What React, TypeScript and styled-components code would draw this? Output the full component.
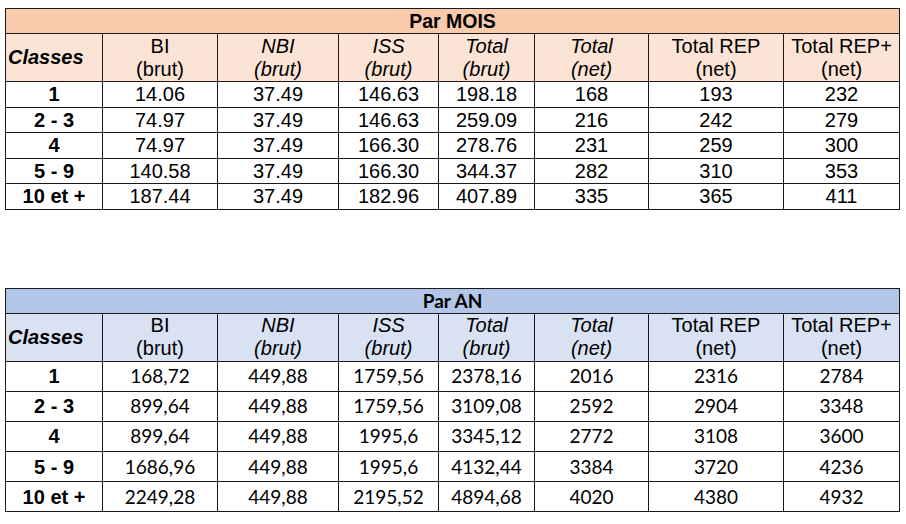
import React from 'react';
import styled, { createGlobalStyle } from 'styled-components';

const GlobalStyle = createGlobalStyle`
  html, body {
    margin: 0;
    padding: 0;
    background: #ffffff;
  }
  body {
    font-family: "Liberation Sans", Arial, sans-serif;
    color: #000;
  }
`;

interface Palette {
    title: string;
    head: string;
}

const palettes: Record<'mois' | 'an', Palette> = {
    mois: { title: '#f8cbad', head: '#fbe4d5' },
    an: { title: '#b4c6e7', head: '#d9e2f3' },
};

const arial = '"Liberation Sans", Arial, sans-serif';
const calibri = '"Lato", "Open Sans", sans-serif';

const Page = styled.div`
  padding: 8px 0 0 5px;
  display: flex;
  flex-direction: column;
  gap: 78px;
`;

const Table = styled.table<{ $rowHeight: number }>`
  width: 894px;
  table-layout: fixed;
  border-collapse: collapse;
  font-size: 20px;
  font-family: ${arial};

  td {
    border: 1px solid #1a1a1a;
    padding: 0;
    text-align: center;
    vertical-align: middle;
  }

  tbody td {
    height: ${p => p.$rowHeight}px;
    line-height: 20px;
  }
`;

const TitleCell = styled.td<{ $bg: string; $calibri?: boolean }>`
  background: ${p => p.$bg};
  height: 24px;
  font-weight: bold;
  font-size: ${p => (p.$calibri ? '19px' : '19.5px')};
  line-height: 22px;
  font-family: ${p => (p.$calibri ? calibri : arial)};
`;

const HeadCell = styled.td<{ $bg: string; $italic?: boolean }>`
  background: ${p => p.$bg};
  height: 47px;
  line-height: 23px;
  font-style: ${p => (p.$italic ? 'italic' : 'normal')};
  white-space: nowrap;
`;

const ClassHead = styled.td<{ $bg: string }>`
  background: ${p => p.$bg};
  height: 47px;
  font-weight: bold;
  font-style: italic;
  text-align: left !important;
  padding-left: 2px !important;
`;

const ClassCell = styled.td`
  font-weight: bold;
`;

const ValueCell = styled.td<{ $calibri?: boolean }>`
  font-family: ${p => (p.$calibri ? calibri : arial)};
  font-size: ${p => (p.$calibri ? '19px' : '20px')};
`;

const widths = [97, 115, 121, 100, 96, 114, 135, 116];

const headers: { top: string; bottom: string; italic: boolean }[] = [
    { top: 'BI', bottom: '(brut)', italic: false },
    { top: 'NBI', bottom: '(brut)', italic: true },
    { top: 'ISS', bottom: '(brut)', italic: true },
    { top: 'Total', bottom: '(brut)', italic: true },
    { top: 'Total', bottom: '(net)', italic: true },
    { top: 'Total REP', bottom: '(net)', italic: false },
    { top: 'Total REP+', bottom: '(net)', italic: false },
];

const classes = ['1', '2 - 3', '4', '5 - 9', '10 et +'];

const moisRows = [
    ['14.06', '37.49', '146.63', '198.18', '168', '193', '232'],
    ['74.97', '37.49', '146.63', '259.09', '216', '242', '279'],
    ['74.97', '37.49', '166.30', '278.76', '231', '259', '300'],
    ['140.58', '37.49', '166.30', '344.37', '282', '310', '353'],
    ['187.44', '37.49', '182.96', '407.89', '335', '365', '411'],
];

const anRows = [
    ['168,72', '449,88', '1759,56', '2378,16', '2016', '2316', '2784'],
    ['899,64', '449,88', '1759,56', '3109,08', '2592', '2904', '3348'],
    ['899,64', '449,88', '1995,6', '3345,12', '2772', '3108', '3600'],
    ['1686,96', '449,88', '1995,6', '4132,44', '3384', '3720', '4236'],
    ['2249,28', '449,88', '2195,52', '4894,68', '4020', '4380', '4932'],
];

interface SalaryTableProps {
    title: string;
    palette: Palette;
    rows: string[][];
    rowHeight: number;
    calibri?: boolean;
}

const SalaryTable = ({ title, palette, rows, rowHeight, calibri }: SalaryTableProps) => (
    <Table $rowHeight={rowHeight}>
        <colgroup>
            {widths.map((w, i) => <col key={i} style={{ width: w }} />)}
        </colgroup>
        <thead>
            <tr>
                <TitleCell colSpan={8} $bg={palette.title} $calibri={calibri}>{title}</TitleCell>
            </tr>
            <tr>
                <ClassHead $bg={palette.head}>Classes</ClassHead>
                {headers.map((h, i) => (
                    <HeadCell key={i} $bg={palette.head} $italic={h.italic}>
                        {h.top}<br />{h.bottom}
                    </HeadCell>
                ))}
            </tr>
        </thead>
        <tbody>
            {rows.map((row, r) => (
                <tr key={r}>
                    <ClassCell>{classes[r]}</ClassCell>
                    {row.map((v, c) => <ValueCell key={c} $calibri={calibri}>{v}</ValueCell>)}
                </tr>
            ))}
        </tbody>
    </Table>
);

const App = () => (
    <>
        <GlobalStyle />
        <Page>
            <SalaryTable title="Par MOIS" palette={palettes.mois} rows={moisRows} rowHeight={24.5} />
            <SalaryTable title="Par AN" palette={palettes.an} rows={anRows} rowHeight={29.2} calibri />
        </Page>
    </>
);

export default App;
